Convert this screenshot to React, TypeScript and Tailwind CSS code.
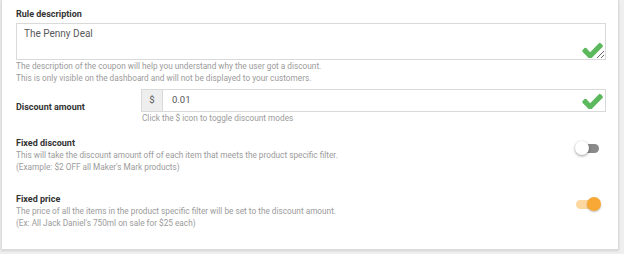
import React from "react";

function Check({ className = "" }: { className?: string }) {
  return (
    <svg
      className={className}
      width="21"
      height="16"
      viewBox="100 280 1580 1160"
      preserveAspectRatio="none"
    >
      <path
        fill="#5cb85c"
        d="M1671 566q0 40-28 68l-724 724-136 136q-28 28-68 28t-68-28l-136-136-362-362q-28-28-28-68t28-68l136-136q28-28 68-28t68 28l294 295 656-657q28-28 68-28t68 28l136 136q28 28 28 68z"
      />
    </svg>
  );
}

function Toggle({ on }: { on: boolean }) {
  return (
    <div className="relative w-[26px] h-[14px] mr-[5px] mt-[4px] shrink-0">
      <div
        className={
          on
            ? "absolute left-[1px] top-[2.5px] w-[21px] h-[9px] rounded-full bg-[#fdd7a0]"
            : "absolute left-[3px] top-[2.5px] w-[21px] h-[9px] rounded-full bg-[#8a8a8a]"
        }
      />
      <div
        className={
          on
            ? "absolute right-0 top-0 w-[14px] h-[14px] rounded-full bg-[#f8a834] shadow-[0_1px_2px_rgba(0,0,0,0.25)]"
            : "absolute left-0 top-0 w-[14px] h-[14px] rounded-full bg-white shadow-[0_1px_3px_rgba(0,0,0,0.4)]"
        }
      />
    </div>
  );
}

export default function App() {
  const label = "text-[9px] leading-[12px] font-bold text-[#333]";
  const help = "text-[8.25px] leading-[12px] text-[#9b9b9b]";
  return (
    <div className="w-[624px] h-[254px] bg-[#efefef] overflow-hidden font-['Roboto',sans-serif]">
      <div className="ml-[1px] w-[618px] h-[250px] bg-white border border-t-0 border-[#dcdcdc] shadow-[0_1px_2px_rgba(0,0,0,0.12)] pl-[14px] pr-[12px] pt-[8px]">
        <div className={label}>Rule description</div>
        <div className="relative mt-[3px] h-[37px]">
          <textarea
            defaultValue="The Penny Deal"
            className="block w-full h-[37px] border border-[#d9d9d9] pt-[3px] pl-[7px] text-[10px] leading-[13px] text-[#5a5a5a] outline-none"
          />
          <Check className="absolute right-[3px] bottom-[2px] pointer-events-none" />
        </div>
        <p className={help}>
          The description of the coupon will help you understand why the user got a discount.
        </p>
        <p className={help}>
          This is only visible on the dashboard and will not be displayed to your customers.
        </p>

        <div className="mt-[5px] flex items-start">
          <div className={`${label} w-[125px] pt-[12px] shrink-0`}>Discount amount</div>
          <div className="flex-1">
            <div className="relative flex h-[23px] border border-[#d9d9d9]">
              <div className="w-[21px] bg-[#eeeeee] border-r border-[#d9d9d9] flex items-center justify-center text-[9.5px] text-[#555]">
                $
              </div>
              <div className="flex items-center pl-[9px] text-[9.5px] text-[#555]">0.01</div>
              <Check className="absolute right-[2px] top-[3px]" />
            </div>
            <p className={`${help} pl-[1px]`}>Click the $ icon to toggle discount modes</p>
          </div>
        </div>

        <div className="mt-[13px] flex items-start justify-between">
          <div>
            <div className={label}>Fixed discount</div>
            <p className={help}>
              This will take the discount amount off of each item that meets the product specific filter.
            </p>
            <p className={help}>(Example: $2 OFF all Maker's Mark products)</p>
          </div>
          <Toggle on={false} />
        </div>

        <div className="mt-[20px] flex items-start justify-between">
          <div>
            <div className={label}>Fixed price</div>
            <p className={help}>
              The price of all the items in the product specific filter will be set to the discount amount.
            </p>
            <p className={help}>(Ex: All Jack Daniel's 750ml on sale for $25 each)</p>
          </div>
          <Toggle on={true} />
        </div>
      </div>
    </div>
  );
}
